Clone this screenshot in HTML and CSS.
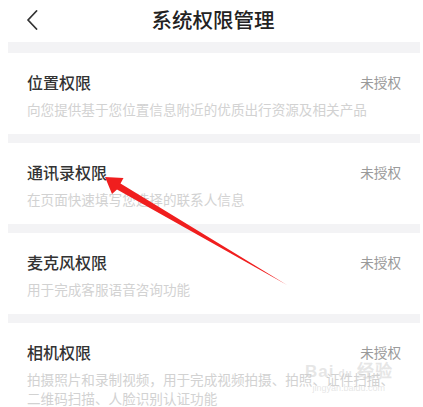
FILE: index.html
```html
<!DOCTYPE html>
<html lang="zh-CN">
<head>
<meta charset="utf-8">
<title>系统权限管理</title>
<link rel="stylesheet" href="styles.css">
</head>
<body>
<div class="page">
  <header class="header">
    <div class="back">
      <svg width="12" height="20" viewBox="0 0 12 20"><path d="M10.5 1 L2 10 L10.5 19" fill="none" stroke="#333" stroke-width="1.8" stroke-linecap="round" stroke-linejoin="round"/></svg>
    </div>
    <h1 class="title">系统权限管理</h1>
    <div></div>
  </header>
  <div class="sep sep-first"></div>
  <section class="item">
    <div class="row"><span class="name">位置权限</span><span class="status">未授权</span></div>
    <p class="desc">向您提供基于您位置信息附近的优质出行资源及相关产品</p>
  </section>
  <div class="sep"></div>
  <section class="item">
    <div class="row"><span class="name">通讯录权限</span><span class="status">未授权</span></div>
    <p class="desc">在页面快速填写您选择的联系人信息</p>
  </section>
  <div class="sep"></div>
  <section class="item">
    <div class="row"><span class="name">麦克风权限</span><span class="status">未授权</span></div>
    <p class="desc">用于完成客服语音咨询功能</p>
  </section>
  <div class="sep"></div>
  <section class="item">
    <div class="row"><span class="name">相机权限</span><span class="status">未授权</span></div>
    <p class="desc">拍摄照片和录制视频，用于完成视频拍摄、拍照、证件扫描、<br>二维码扫描、人脸识别认证功能</p>
  </section>

  <svg class="arrow" width="423" height="407" viewBox="0 0 423 407">
    <polygon points="105,177 123.5,178 120.5,183.5 287,285 117,189.5 112,194" fill="#f01e1e"/>
  </svg>
  <div class="watermark">
    <span class="wm-main">Bai<span class="paw">du</span>经验</span>
    <span class="wm-url">jingyan.baidu.com</span>
  </div>
</div>
</body>
</html>
```
FILE: styles.css
```css
html, body {
  margin: 0;
  padding: 0;
  background: #fff;
}
body {
  font-family: "Noto Sans CJK SC", "Noto Sans", sans-serif;
  color: #333;
}
.page {
  position: relative;
  width: 423px;
  height: 407px;
  overflow: hidden;
}
.header {
  height: 42px;
  display: grid;
  grid-template-columns: 1fr auto 1fr;
  align-items: center;
}
.back {
  padding-left: 26px;
  padding-bottom: 3px;
  display: flex;
}
.title {
  margin: 0;
  font-size: 20.5px;
  font-weight: 500;
  color: #222;
  line-height: 28px;
  padding-bottom: 4px;
  padding-left: 3px;
}
.sep {
  height: 9px;
  background: #f3f3f5;
  margin: 0 3px 0 8px;
}
.sep-first {
  height: 11px;
}
.item {
  height: 81px;
  padding: 18px 22px 0 27px;
  box-sizing: border-box;
}
.row {
  display: flex;
  justify-content: space-between;
  align-items: center;
  height: 22px;
}
.name {
  font-size: 16px;
  font-weight: 500;
  color: #333;
  line-height: 22px;
}
.status {
  font-size: 13.6px;
  color: #9a9a9a;
  line-height: 22px;
}
.desc {
  margin: 7px 0 0;
  font-size: 13.6px;
  line-height: 19px;
  color: #d2d2d2;
}
.arrow {
  position: absolute;
  left: 0;
  top: 0;
  pointer-events: none;
}
.watermark {
  position: absolute;
  left: 305px;
  top: 362px;
  display: flex;
  flex-direction: column;
  align-items: center;
  color: rgba(205, 205, 205, 0.5);
  font-family: "Liberation Sans", sans-serif;
  pointer-events: none;
}
.wm-main {
  font-size: 17px;
  font-weight: bold;
  line-height: 19px;
  letter-spacing: 1px;
}
.paw {
  font-size: 10px;
  padding: 0 4px;
}
.wm-url {
  font-size: 9px;
  line-height: 11px;
}
```
